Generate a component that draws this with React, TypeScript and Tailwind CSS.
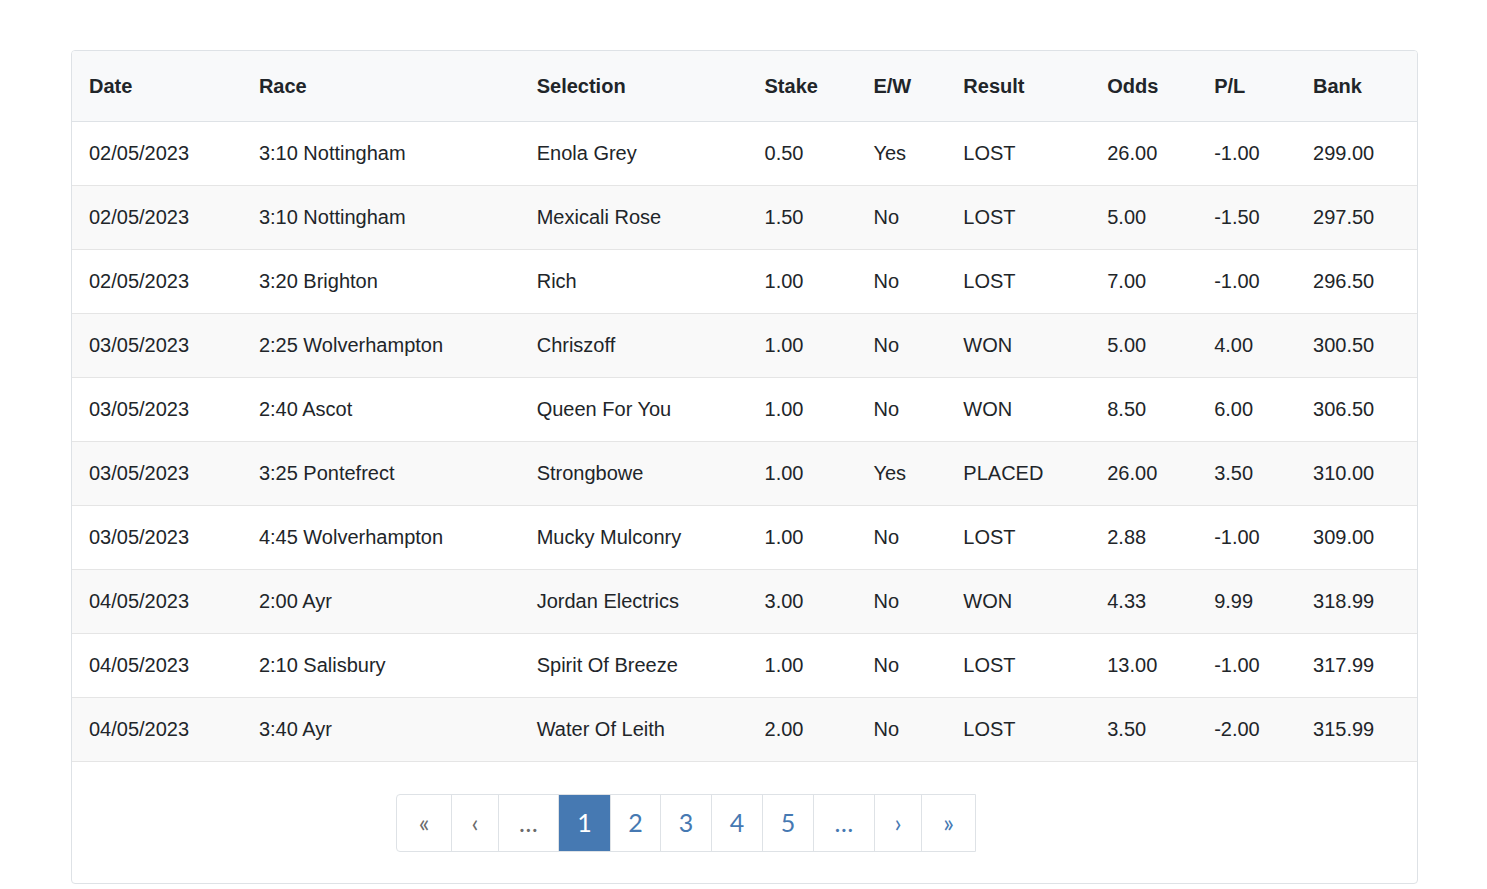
const rows = [
  ["02/05/2023","3:10 Nottingham","Enola Grey","0.50","Yes","LOST","26.00","-1.00","299.00"],
  ["02/05/2023","3:10 Nottingham","Mexicali Rose","1.50","No","LOST","5.00","-1.50","297.50"],
  ["02/05/2023","3:20 Brighton","Rich","1.00","No","LOST","7.00","-1.00","296.50"],
  ["03/05/2023","2:25 Wolverhampton","Chriszoff","1.00","No","WON","5.00","4.00","300.50"],
  ["03/05/2023","2:40 Ascot","Queen For You","1.00","No","WON","8.50","6.00","306.50"],
  ["03/05/2023","3:25 Pontefrect","Strongbowe","1.00","Yes","PLACED","26.00","3.50","310.00"],
  ["03/05/2023","4:45 Wolverhampton","Mucky Mulconry","1.00","No","LOST","2.88","-1.00","309.00"],
  ["04/05/2023","2:00 Ayr","Jordan Electrics","3.00","No","WON","4.33","9.99","318.99"],
  ["04/05/2023","2:10 Salisbury","Spirit Of Breeze","1.00","No","LOST","13.00","-1.00","317.99"],
  ["04/05/2023","3:40 Ayr","Water Of Leith","2.00","No","LOST","3.50","-2.00","315.99"],
];
const heads = ["Date","Race","Selection","Stake","E/W","Result","Odds","P/L","Bank"];
const widths = [170,278,228,109,90,144,107,99,121];
const pages: [string, string, number][] = [
  ["«","text-[#6b6b6b]",54],["‹","text-[#6b6b6b]",47],["…","text-[#6b6b6b]",60],["1","",52],["2","text-[#4679b2]",50],["3","text-[#4679b2]",51],["4","text-[#4679b2]",51],["5","text-[#4679b2]",51],["…","text-[#4679b2]",61],["›","text-[#4679b2]",47],["»","text-[#4679b2]",54],
];
export default function App() {
  return (
    <div className="bg-white w-[1487px] h-[889px] pt-[50px] pl-[71px]" style={{fontFamily:'"Liberation Sans", Arial, sans-serif'}}>
      <div className="w-[1347px] h-[834px] border border-[#dee2e6] rounded-[4px] overflow-hidden">
        <table className="border-collapse text-[20px] text-[#212529]">
          <colgroup>{widths.map((w,i)=><col key={i} style={{width:w}}/>)}</colgroup>
          <thead>
            <tr className="h-[70px] bg-[#f8f9fa] border-b border-[#dee2e6]">
              {heads.map(h=><th key={h} className="text-left font-bold pl-[17px]">{h}</th>)}
            </tr>
          </thead>
          <tbody>
            {rows.map((r,i)=>(
              <tr key={i} className={`h-[64px] border-b border-[#e5e5e5] ${i%2===1?"bg-[#f9f9f9]":"bg-white"}`}>
                {r.map((c,j)=><td key={j} className="pl-[17px] whitespace-nowrap">{c}</td>)}
              </tr>
            ))}
          </tbody>
        </table>
        <div className="flex justify-center pt-[32px] pr-[117px]">
          <div className="flex h-[58px] border border-[#dee2e6] rounded-l-[4px]" style={{fontFamily:'Lato, sans-serif'}}>
            {pages.map(([t,c,w],i)=>(
              <div key={i} style={{width:w}} className={`flex items-center justify-center text-[25px] ${i>0?"border-l border-[#dee2e6]":""} ${t==="1"?"bg-[#4679b2] text-white":c}`}>{t}</div>
            ))}
          </div>
        </div>
      </div>
    </div>
  );
}
